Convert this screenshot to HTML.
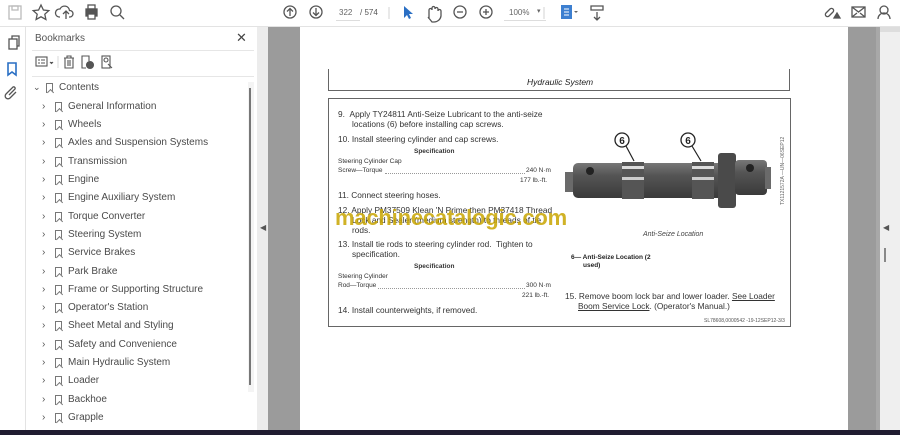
<!DOCTYPE html>
<html><head><meta charset="utf-8"><style>
*{margin:0;padding:0;box-sizing:border-box}
body{width:900px;height:435px;overflow:hidden;background:#fff;font-family:"Liberation Sans",sans-serif;position:relative}
.a{position:absolute}
.t{position:absolute;white-space:nowrap;color:#333;font-size:8.3px}
.bm{position:absolute;left:35px;font-size:10px;color:#4a4a4a;white-space:nowrap}
.bm .c{position:absolute;left:7px;top:0;color:#555;font-size:10px}
.bm .i{position:absolute;left:20px;top:1px;width:7px;height:10px;border:1.2px solid #777;border-bottom:none}
.bm .i:after{content:"";position:absolute;left:0.5px;top:6px;width:4px;height:4px;border-left:1.2px solid #777;border-top:1.2px solid #777;transform:rotate(45deg);background:#fff}
.bm .l{position:absolute;left:33px;top:0}
</style></head><body>
<div class="a" style="left:0;top:0;width:900px;height:27px;background:#fff;border-bottom:1px solid #e3e3e3"></div>
<svg class="a" style="left:0;top:0" width="900" height="27">
<g fill="none" stroke="#555" stroke-width="1.3">
<rect x="9" y="6" width="12" height="13" stroke="#bbb"/><rect x="12" y="6" width="6" height="4" stroke="#bbb"/>
<path d="M41 5l2.4 5 5.4.6-4 3.6 1.1 5.3-4.9-2.7-4.9 2.7 1.1-5.3-4-3.6 5.4-.6z"/>
<path d="M60 17h-1a4 4 0 0 1 1-8 5 5 0 0 1 9.5 1.5 3 3 0 0 1 .5 6.5h-1M66 19v-7M63 14l3-3 3 3"/>
<rect x="86" y="9" width="11" height="7" fill="#555"/><rect x="88" y="5" width="7" height="4"/><rect x="88" y="14" width="7" height="5" fill="#fff"/>
<circle cx="116" cy="11" r="5"/><path d="M120 15l4 4"/>
<circle cx="290" cy="12" r="6"/><path d="M290 16v-7M287 11.5l3-3 3 3"/>
<circle cx="316" cy="12" r="6"/><path d="M316 8v7M313 12.5l3 3 3-3"/>
<path d="M389 7v12" stroke="#ddd"/>
<path d="M429 19v-9a1.5 1.5 0 0 1 3 0v-2a1.5 1.5 0 0 1 3 0v1a1.5 1.5 0 0 1 3 0v2a1.5 1.5 0 0 1 3 0v5a7 7 0 0 1-7 6h-2l-4-5"/>
<circle cx="460" cy="12" r="6"/><path d="M457 12h6"/>
<circle cx="486" cy="12" r="6"/><path d="M483 12h6M486 9v6"/>
<path d="M544 7v12" stroke="#ddd"/>
<path d="M591 6h12v4h-12zM597 12v8M594 17l3 3 3-3"/>
<path d="M829 16l4-4a2 2 0 0 0-3-3l-4 4a2 2 0 0 0 3 3"/><path d="M834 18l3-5 3 5z" fill="#555"/>
<rect x="852" y="7" width="13" height="10"/><path d="M852 7l6.5 5 6.5-5M852 17l5-4M865 17l-5-4"/>
<circle cx="884" cy="10" r="4"/><path d="M878 19a6 6 0 0 1 12 0"/>
</g>
<path d="M404 6v12l3-3 2 4 2-1-2-4h4z" fill="#2a6fc4"/>
<rect x="561" y="5" width="11" height="14" fill="#3d7fd0"/><path d="M564 9h5M564 12h5M564 15h5" stroke="#fff"/>
<path d="M574 11l2 2 2-2" fill="#666"/>
</svg>
<div class="t" style="left:339px;top:8px;font-size:8px;color:#666">322</div>
<div class="a" style="left:336px;top:20px;width:24px;height:1px;background:#ddd"></div>
<div class="t" style="left:360px;top:8px;font-size:8px;color:#555">/ 574</div>
<div class="t" style="left:509px;top:8px;font-size:8px;color:#666">100%</div>
<div class="t" style="left:537px;top:7px;font-size:7px;color:#666">▾</div>
<div class="a" style="left:504px;top:20px;width:42px;height:1px;background:#ddd"></div>

<div class="a" style="left:25px;top:27px;width:1px;height:403px;background:#e3e3e3"></div>
<svg class="a" style="left:0;top:27px" width="25" height="80"><g fill="none" stroke-width="1.3">
<rect x="9" y="12" width="8" height="10" stroke="#555"/><path d="M12 12V9h7v10h-2" stroke="#555"/>
<path d="M8 36h8v12l-4-3-4 3z" stroke="#2a6fc4" stroke-width="1.6"/>
<path d="M16 65l-6 6a2.5 2.5 0 0 1-4-4l7-7a1.5 1.5 0 0 1 2 2l-6 6" stroke="#555"/></g></svg>

<div class="t" style="left:35px;top:33px;font-size:10px;color:#555">Bookmarks</div>
<div class="t" style="left:236px;top:30px;font-size:13px;color:#444">✕</div>
<div class="a" style="left:32px;top:50px;width:222px;height:1px;background:#e6e6e6"></div>
<div class="a" style="left:32px;top:76px;width:222px;height:1px;background:#e6e6e6"></div>
<svg class="a" style="left:30px;top:52px" width="100" height="22"><g fill="none" stroke="#555" stroke-width="1.1">
<rect x="6" y="5" width="11" height="9"/><path d="M8 8h2M11 8h4M8 11h2M11 11h4"/>
<path d="M20 10l1.5 1.5L23 10" fill="#555"/>
<path d="M28 4v12" stroke="#ddd"/>
<path d="M34 6h10M37 6V4h4v2M35 6v10h8V6M38 8v6M40 8v6"/>
<path d="M56 16h-4V4h7v5"/><circle cx="60" cy="13" r="3.5" fill="#555"/>
<rect x="72" y="4" width="8" height="12"/><circle cx="76" cy="8" r="2"/><path d="M78 12l4 4"/>
</g></svg>
<div class="a" style="left:248px;top:82px;width:6px;height:310px;background:#f4f4f4"></div>
<div class="a" style="left:249px;top:88px;width:1.5px;height:297px;background:#777"></div>

<div class="bm" style="top:82px;left:26px"><span class="c" style="font-size:9px">⌄</span><span class="i"></span><span class="l">Contents</span></div>
<div class="bm" style="top:101px"><span class="c">›</span><span class="i"></span><span class="l">General Information</span></div>
<div class="bm" style="top:119px"><span class="c">›</span><span class="i"></span><span class="l">Wheels</span></div>
<div class="bm" style="top:137px"><span class="c">›</span><span class="i"></span><span class="l">Axles and Suspension Systems</span></div>
<div class="bm" style="top:156px"><span class="c">›</span><span class="i"></span><span class="l">Transmission</span></div>
<div class="bm" style="top:174px"><span class="c">›</span><span class="i"></span><span class="l">Engine</span></div>
<div class="bm" style="top:192px"><span class="c">›</span><span class="i"></span><span class="l">Engine Auxiliary System</span></div>
<div class="bm" style="top:211px"><span class="c">›</span><span class="i"></span><span class="l">Torque Converter</span></div>
<div class="bm" style="top:229px"><span class="c">›</span><span class="i"></span><span class="l">Steering System</span></div>
<div class="bm" style="top:247px"><span class="c">›</span><span class="i"></span><span class="l">Service Brakes</span></div>
<div class="bm" style="top:266px"><span class="c">›</span><span class="i"></span><span class="l">Park Brake</span></div>
<div class="bm" style="top:284px"><span class="c">›</span><span class="i"></span><span class="l">Frame or Supporting Structure</span></div>
<div class="bm" style="top:302px"><span class="c">›</span><span class="i"></span><span class="l">Operator's Station</span></div>
<div class="bm" style="top:320px"><span class="c">›</span><span class="i"></span><span class="l">Sheet Metal and Styling</span></div>
<div class="bm" style="top:339px"><span class="c">›</span><span class="i"></span><span class="l">Safety and Convenience</span></div>
<div class="bm" style="top:357px"><span class="c">›</span><span class="i"></span><span class="l">Main Hydraulic System</span></div>
<div class="bm" style="top:375px"><span class="c">›</span><span class="i"></span><span class="l">Loader</span></div>
<div class="bm" style="top:394px"><span class="c">›</span><span class="i"></span><span class="l">Backhoe</span></div>
<div class="bm" style="top:412px"><span class="c">›</span><span class="i"></span><span class="l">Grapple</span></div>

<div class="a" style="left:257px;top:27px;width:11px;height:403px;background:#ececec"></div>
<div class="t" style="left:260px;top:223px;font-size:8px;color:#555">◀</div>
<div class="a" style="left:268px;top:27px;width:32px;height:403px;background:#9b9b9b"></div>
<div class="a" style="left:848px;top:27px;width:32px;height:403px;background:#9b9b9b"></div>
<div class="a" style="left:876px;top:27px;width:4px;height:403px;background:#a8a8a8"></div>
<div class="a" style="left:880px;top:27px;width:20px;height:403px;background:#efefef"></div>
<div class="a" style="left:880px;top:27px;width:20px;height:5px;background:#ddd"></div>
<div class="t" style="left:883px;top:223px;font-size:8px;color:#555">◀</div>
<div class="a" style="left:884px;top:248px;width:1.5px;height:14px;background:#888"></div>
<div class="a" style="left:0;top:430px;width:900px;height:5px;background:#201c30"></div>

<div class="a" style="left:300px;top:27px;width:548px;height:403px;background:#fff"></div>
<div class="a" style="left:328px;top:69px;width:1px;height:22px;background:#666"></div>
<div class="a" style="left:789px;top:69px;width:1px;height:22px;background:#666"></div>
<div class="a" style="left:328px;top:90px;width:462px;height:1px;background:#666"></div>
<div class="t" style="left:527px;top:77px;font-style:italic;font-size:8.5px;color:#222">Hydraulic System</div>
<div class="a" style="left:328px;top:98px;width:463px;height:229px;border:1px solid #666"></div>

<div class="t" style="left:338px;top:109px">9.&nbsp;&nbsp;Apply TY24811 Anti-Seize Lubricant to the anti-seize</div>
<div class="t" style="left:352px;top:119px">locations (6) before installing cap screws.</div>
<div class="t" style="left:338px;top:134px">10. Install steering cylinder and cap screws.</div>
<div class="t" style="left:414px;top:148px;font-size:6.5px;font-weight:bold">Specification</div>
<div class="t" style="left:338px;top:158px;font-size:6.5px">Steering Cylinder Cap</div>
<div class="t" style="left:338px;top:167px;font-size:6.5px">Screw—Torque</div>
<div class="a" style="left:385px;top:173px;width:140px;border-top:1px dotted #999"></div>
<div class="t" style="left:526px;top:167px;font-size:6.5px">240 N·m</div>
<div class="t" style="left:520px;top:177px;font-size:6.5px">177 lb.-ft.</div>
<div class="t" style="left:338px;top:190px">11. Connect steering hoses.</div>
<div class="t" style="left:338px;top:205px">12. Apply PM37509 Klean 'N Prime then PM37418 Thread</div>
<div class="t" style="left:352px;top:215px">Lock and Sealer (medium strength) to threads of tie</div>
<div class="t" style="left:352px;top:225px">rods.</div>
<div class="t" style="left:335px;top:205px;font-size:22px;font-weight:bold;color:rgba(200,165,0,0.85);letter-spacing:-0.2px">machinecatalogic.com</div>
<div class="t" style="left:338px;top:239px">13. Install tie rods to steering cylinder rod.&nbsp; Tighten to</div>
<div class="t" style="left:352px;top:249px">specification.</div>
<div class="t" style="left:414px;top:263px;font-size:6.5px;font-weight:bold">Specification</div>
<div class="t" style="left:338px;top:273px;font-size:6.5px">Steering Cylinder</div>
<div class="t" style="left:338px;top:282px;font-size:6.5px">Rod—Torque</div>
<div class="a" style="left:378px;top:288px;width:147px;border-top:1px dotted #999"></div>
<div class="t" style="left:526px;top:282px;font-size:6.5px">300 N·m</div>
<div class="t" style="left:522px;top:292px;font-size:6.5px">221 lb.-ft.</div>
<div class="t" style="left:338px;top:305px">14. Install counterweights, if removed.</div>

<svg class="a" style="left:560px;top:125px" width="230" height="90">
<defs><linearGradient id="g" x1="0" y1="0" x2="0" y2="1"><stop offset="0" stop-color="#777"/><stop offset=".35" stop-color="#555"/><stop offset="1" stop-color="#3a3a3a"/></linearGradient></defs>
<rect x="5" y="47" width="10" height="20" fill="#6a6a6a"/>
<rect x="13" y="38" width="150" height="35" rx="5" fill="url(#g)"/>
<rect x="62" y="37" width="22" height="37" fill="#555"/><rect x="62" y="41" width="22" height="3" fill="#ddd"/><rect x="62" y="52" width="22" height="3" fill="#ccc"/>
<rect x="132" y="37" width="22" height="37" fill="#555"/><rect x="132" y="41" width="22" height="3" fill="#ddd"/><rect x="132" y="52" width="22" height="3" fill="#ccc"/>
<rect x="158" y="28" width="18" height="55" rx="3" fill="#4a4a4a"/>
<rect x="175" y="35" width="32" height="35" rx="4" fill="url(#g)"/>
<rect x="205" y="42" width="6" height="22" fill="#6a6a6a"/>
<circle cx="30" cy="46" r="4" fill="#222"/><circle cx="190" cy="43" r="4" fill="#222"/>
<g fill="#fff" stroke="#222" stroke-width="1.3"><circle cx="62" cy="15" r="7"/><circle cx="128" cy="15" r="7"/></g>
<g font-family="Liberation Sans" font-weight="bold" font-size="10" fill="#222" text-anchor="middle"><text x="62" y="19">6</text><text x="128" y="19">6</text></g>
<path d="M66 21l8 15M132 21l9 15" stroke="#222" stroke-width="1.2"/>
</svg>
<div class="t" style="left:780px;top:125px;width:8px;height:80px;font-size:5px;color:#666;writing-mode:vertical-rl;transform:rotate(180deg)">TX1121572A —UN—06SEP12</div>
<div class="t" style="left:643px;top:231px;font-style:italic;font-size:7px;color:#444">Anti-Seize Location</div>
<div class="t" style="left:571px;top:254px;font-size:6.5px;font-weight:bold;color:#222">6— Anti-Seize Location (2</div>
<div class="t" style="left:583px;top:262px;font-size:6.5px;font-weight:bold;color:#222">used)</div>
<div class="t" style="left:565px;top:291px">15. Remove boom lock bar and lower loader. <u>See Loader</u></div>
<div class="t" style="left:578px;top:301px"><u>Boom Service Lock</u>. (Operator's Manual.)</div>
<div class="t" style="left:704px;top:318px;font-size:5px;color:#555">SL78608,0000542 -19-12SEP12-3/3</div>
</body></html>
